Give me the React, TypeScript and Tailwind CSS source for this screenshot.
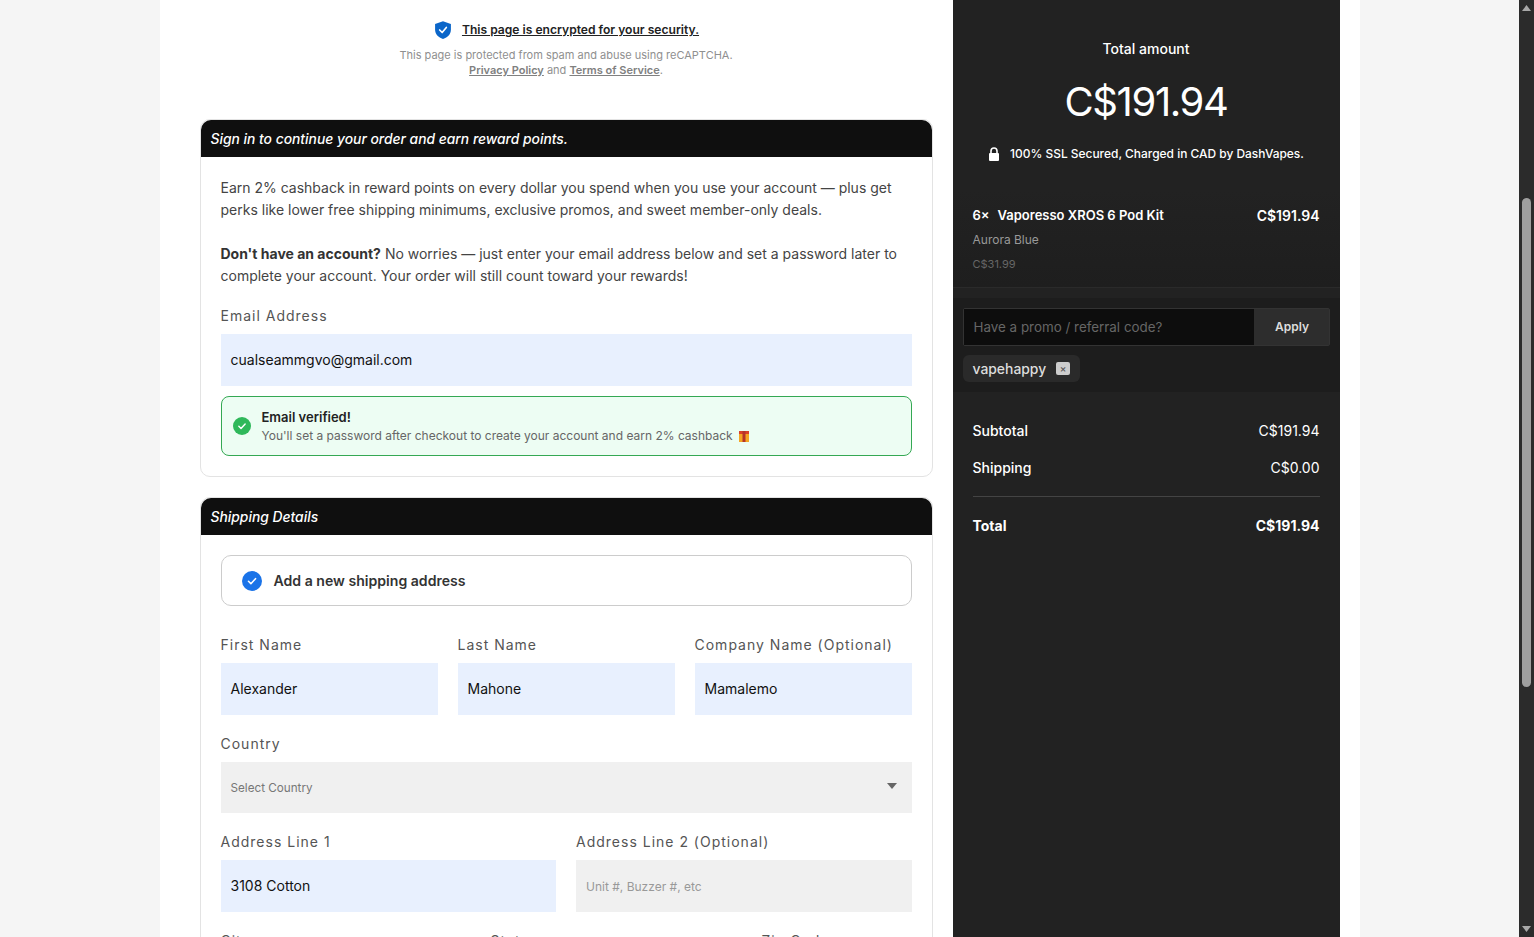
import React from 'react';

const labelClass = 'block text-[14px] leading-[18px] tracking-[1px] text-[#555] mb-[9px]';
const filledClass = 'h-[52px] bg-[#e8f0fe] px-[10px] pb-[2px] flex items-center text-[14px] text-[#111]';

function Field({ label, value, className }: { label: string; value: string; className?: string }) {
  return (
    <div className={className}>
      <span className={labelClass}>{label}</span>
      <div className={filledClass}>{value}</div>
    </div>
  );
}

function CardHeader({ title }: { title: string }) {
  return (
    <div className="h-[37px] bg-[#0f0f0f] rounded-t-[10px] px-[10px] pt-[2px] flex items-center text-[13.85px] italic font-medium text-white">
      {title}
    </div>
  );
}

function CheckDot({ size, color }: { size: number; color: string }) {
  return (
    <svg width={size} height={size} viewBox="0 0 20 20" className="shrink-0">
      <circle cx="10" cy="10" r="10" fill={color} />
      <path d="M6.5 10.3l2.4 2.4 4.6-5" fill="none" stroke="#fff" strokeWidth="1.6" strokeLinecap="round" strokeLinejoin="round" />
    </svg>
  );
}

function Scrollbar() {
  return (
    <div className="w-[15px] shrink-0 h-full bg-[#2b2b2b] flex flex-col items-center relative">
      <svg width="11" height="8" viewBox="0 0 11 8" className="mt-[4px] shrink-0">
        <path d="M5.5 1L10 7H1z" fill="#a8a8a8" />
      </svg>
      <div className="w-[9px] h-[489px] mt-[186px] bg-[#9f9f9f] rounded-[5px] shrink-0" />
      <div className="flex-1" />
      <svg width="11" height="8" viewBox="0 0 11 8" className="mb-[4px] shrink-0">
        <path d="M5.5 7L10 1H1z" fill="#a8a8a8" />
      </svg>
    </div>
  );
}

export default function App() {
  return (
    <div className="h-[937px] overflow-hidden flex bg-[#f5f5f5] font-['Inter',sans-serif]">
      <div className="flex-1 min-w-0 flex justify-center">
        <div className="w-[1200px] flex bg-white pr-[20px] h-[937px] overflow-hidden">
          {/* Left column */}
          <div className="w-[793px] shrink-0 pl-[40px] pr-[20px]">
            <div className="pt-[19px] h-[119px] text-center">
              <div className="flex items-center justify-center gap-[9px] h-[21px]">
                <svg width="20" height="20" viewBox="0 0 24 24">
                  <path d="M12 1.5l9.5 3.2v6.800c0 5.600-3.900 9.600-9.500 11.200-5.600-1.600-9.500-5.600-9.500-11.200V4.700z" fill="#0b66c9" />
                  <path d="M8 12l3 3 5-6" fill="none" stroke="#fff" strokeWidth="2" strokeLinecap="round" strokeLinejoin="round" />
                </svg>
                <span className="pt-[2px] text-[12.1px] font-semibold underline text-[#222]">This page is encrypted for your security.</span>
              </div>
              <p className="mt-[8px] text-[11px] leading-[15px] text-[#8f8f8f]">
                This page is protected from spam and abuse using reCAPTCHA.
                <br />
                <span className="font-semibold underline text-[#808080]">Privacy Policy</span> and{' '}
                <span className="font-semibold underline text-[#808080]">Terms of Service</span>.
              </p>
            </div>

            <div className="border border-[#e3e3e3] rounded-[10px] h-[358px]">
              <CardHeader title="Sign in to continue your order and earn reward points." />
              <div className="px-[20px] pt-[20px]">
                <p className="text-[14px] leading-[22px] text-[#444]">
                  Earn 2% cashback in reward points on every dollar you spend when you use your account — plus get perks like lower free shipping minimums, exclusive promos, and sweet member-only deals.
                </p>
                <p className="mt-[22px] text-[14px] leading-[22px] text-[#444]">
                  <strong className="font-bold text-[#333]">Don't have an account?</strong> No worries — just enter your email address below and set a password later to complete your account. Your order will still count toward your rewards!
                </p>
                <div className="mt-[20px]">
                  <Field label="Email Address" value="cualseammgvo@gmail.com" />
                </div>
                <div className="mt-[10px] h-[60px] rounded-[8px] border border-[#34a853] bg-[#edfdf3] flex items-center gap-[11px] px-[11px]">
                  <CheckDot size={18} color="#2fb85a" />
                  <div className="pt-[1px]">
                    <div className="text-[13px] leading-[18px] font-semibold text-[#222]">Email verified!</div>
                    <div className="mt-[1px] text-[12px] leading-[18px] text-[#666] flex items-center gap-[5px]">
                      You'll set a password after checkout to create your account and earn 2% cashback
                      <svg width="12" height="13" viewBox="0 0 12 13">
                        <rect x="1" y="1" width="10" height="11" fill="#f5a623" />
                        <rect x="1" y="1" width="10" height="3" fill="#d9412b" />
                        <rect x="4.500" y="1" width="3" height="11" fill="#b5352a" />
                      </svg>
                    </div>
                  </div>
                </div>
              </div>
            </div>

            <div className="mt-[20px] border border-[#e3e3e3] rounded-[10px] pb-[40px]">
              <CardHeader title="Shipping Details" />
              <div className="px-[20px] pt-[20px]">
                <div className="h-[51px] border border-[#ccc] rounded-[10px] flex items-center gap-[12px] px-[20px]">
                  <CheckDot size={20} color="#1a73e8" />
                  <span className="text-[14.1px] font-semibold text-[#333]">Add a new shipping address</span>
                </div>
                <div className="mt-[30px] grid grid-cols-3 gap-[20px]">
                  <Field label="First Name" value="Alexander" />
                  <Field label="Last Name" value="Mahone" />
                  <Field label="Company Name (Optional)" value="Mamalemo" />
                </div>
                <div className="mt-[20px]">
                  <span className={labelClass}>Country</span>
                  <div className="h-[51px] bg-[#f0f0f0] pl-[10px] pr-[15px] flex items-center justify-between text-[11.7px] text-[#777]">
                    <span className="pt-[2px]">Select Country</span>
                    <svg width="10" height="6" viewBox="0 0 10 6" className="mb-[3px]">
                      <path d="M0 0h10L5 6z" fill="#666" />
                    </svg>
                  </div>
                </div>
                <div className="mt-[20px] grid grid-cols-2 gap-[20px]">
                  <Field label="Address Line 1" value="3108 Cotton" />
                  <div>
                    <span className={labelClass}>Address Line 2 (Optional)</span>
                    <div className="h-[52px] bg-[#f0f0f0] px-[10px] pt-[2px] flex items-center text-[12px] text-[#999]">Unit #, Buzzer #, etc</div>
                  </div>
                </div>
                <div className="mt-[20px] grid grid-cols-[250px_251px_1fr] gap-[20px]">
                  <span className={labelClass}>City</span>
                  <span className={labelClass}>State</span>
                  <span className={labelClass}>Zip Code</span>
                </div>
              </div>
            </div>
          </div>

          {/* Order summary */}
          <div className="w-[387px] shrink-0 bg-[#222] text-white">
            <div className="h-[190px] pt-[40px] text-center">
              <div className="text-[14px] leading-[18px] font-medium">Total amount</div>
              <div className="mt-[19px] text-[40px] leading-[50px] tracking-[-1.4px]">C$191.94</div>
              <div className="mt-[19px] flex items-center justify-center gap-[10px] text-[11.95px] leading-[16px] font-medium">
                <svg width="12" height="14" viewBox="0 0 12 14" className="mb-[1px]">
                  <path d="M3 6.500V4a3 3 0 0 1 6 0v2.500" fill="none" stroke="#fff" strokeWidth="1.600" />
                  <rect x="1" y="6" width="10" height="8" rx="1" fill="#fff" />
                </svg>
                100% SSL Secured, Charged in CAD by DashVapes.
              </div>
            </div>
            <div className="h-[98px] px-[20px] pt-[16px] border-b border-[#2a2a2a] bg-gradient-to-b from-[#222] to-[#1e1e1e]">
              <div className="flex justify-between text-[13px] leading-[18px] font-semibold">
                <span>
                  <span className="mr-[8px]">6×</span>Vaporesso XROS 6 Pod Kit
                </span>
                <span className="text-[14px] pt-[1px]">C$191.94</span>
              </div>
              <div className="mt-[6px] text-[12px] leading-[18px] text-[#999]">Aurora Blue</div>
              <div className="mt-[7px] text-[11px] leading-[16px] text-[#666]">C$31.99</div>
            </div>
            <div className="h-[94px] bg-[#1d1d1d] mt-[10px] px-[10px] pt-[10px]">
              <div className="flex h-[38px] border border-[#333] rounded-[2px]">
                <div className="flex-1 bg-[#0d0d0d] px-[10px] flex items-center text-[13.4px] text-[#666]">Have a promo / referral code?</div>
                <div className="w-[75px] bg-[#2d2d2d] pl-[2px] flex items-center justify-center text-[12px] font-semibold text-[#ddd]">Apply</div>
              </div>
              <div className="mt-[9px] inline-flex items-center h-[27px] gap-[10px] px-[10px] rounded-[6px] bg-[#2a2a2a] text-[13.9px] font-medium text-[#ddd]">
                <span className="pt-[2px]">vapehappy</span>
                <span className="w-[14px] h-[13px] rounded-[2px] bg-[#ccc] mb-[1px] flex items-center justify-center text-[10px] leading-none text-[#555]">×</span>
              </div>
            </div>
            <div className="px-[20px] pt-[29px]">
              <div className="flex justify-between text-[14px] leading-[20px]">
                <span className="font-medium">Subtotal</span>
                <span>C$191.94</span>
              </div>
              <div className="mt-[17px] flex justify-between text-[14px] leading-[20px]">
                <span className="font-medium">Shipping</span>
                <span>C$0.00</span>
              </div>
              <div className="mt-[18px] border-t border-[#444]" />
              <div className="mt-[19px] flex justify-between text-[14px] leading-[20px] font-bold">
                <span>Total</span>
                <span>C$191.94</span>
              </div>
            </div>
          </div>
        </div>
      </div>
      <Scrollbar />
    </div>
  );
}
